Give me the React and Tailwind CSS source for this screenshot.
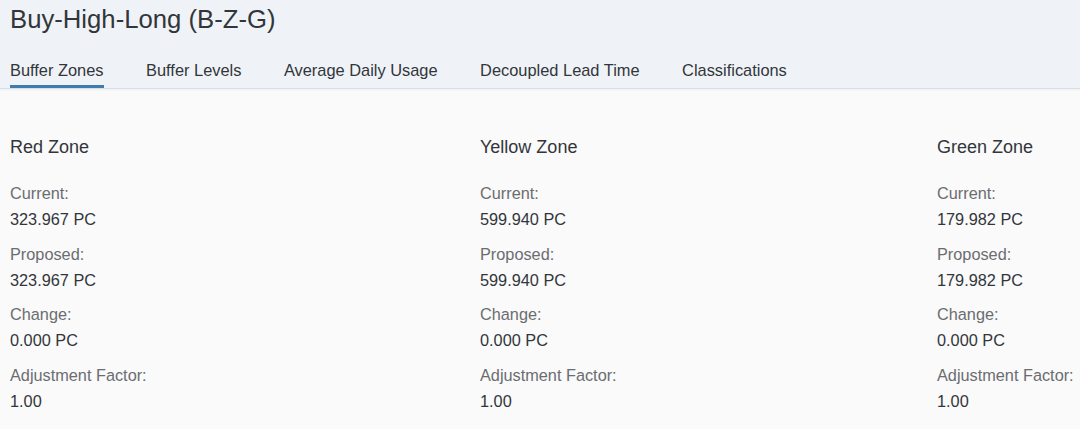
const tabs = ['Buffer Zones', 'Buffer Levels', 'Average Daily Usage', 'Decoupled Lead Time', 'Classifications'];

const zones = [
  { name: 'Red Zone', current: '323.967 PC', proposed: '323.967 PC', change: '0.000 PC', factor: '1.00' },
  { name: 'Yellow Zone', current: '599.940 PC', proposed: '599.940 PC', change: '0.000 PC', factor: '1.00' },
  { name: 'Green Zone', current: '179.982 PC', proposed: '179.982 PC', change: '0.000 PC', factor: '1.00' },
];

function Field({ label, value }) {
  return (
    <div>
      <div className="text-[16.3px] leading-[26px] text-[#6a6d70]">{label}</div>
      <div className="text-[16.3px] leading-[26px] text-[#32363a]">{value}</div>
    </div>
  );
}

function App() {
  return (
    <div className="w-[1080px] h-[429px] overflow-hidden bg-[#fafafa] font-['Liberation_Sans',Arial,sans-serif]">
      {/* header */}
      <div className="bg-[#eff3f7] border-b border-[#d5dfe9] shadow-[0_1px_2px_rgba(0,0,0,0.05)]">
        <h1 className="px-[10px] text-[25.7px] leading-[38px] text-[#32363a]">Buy-High-Long (B-Z-G)</h1>
        <div className="flex gap-[42.5px] px-[10px] mt-[14px]">
          {tabs.map((t, i) => (
            <div
              key={t}
              className={
                'text-[16.4px] h-[36px] pt-[6px] text-[#32363a] border-b-[3px] ' +
                (i === 0 ? 'border-[#427cac]' : 'border-transparent')
              }
            >
              {t}
            </div>
          ))}
        </div>
      </div>

      {/* content */}
      <div className="grid grid-cols-[470px_457px_1fr] pl-[10px] pt-[46px]">
        {zones.map((z) => (
          <div key={z.name}>
            <div className="text-[18px] leading-[24px] text-[#32363a] mb-[21px]">{z.name}</div>
            <div className="flex flex-col gap-[8.6px]">
              <Field label="Current:" value={z.current} />
              <Field label="Proposed:" value={z.proposed} />
              <Field label="Change:" value={z.change} />
              <Field label="Adjustment Factor:" value={z.factor} />
            </div>
          </div>
        ))}
      </div>
    </div>
  );
}

export default App;
